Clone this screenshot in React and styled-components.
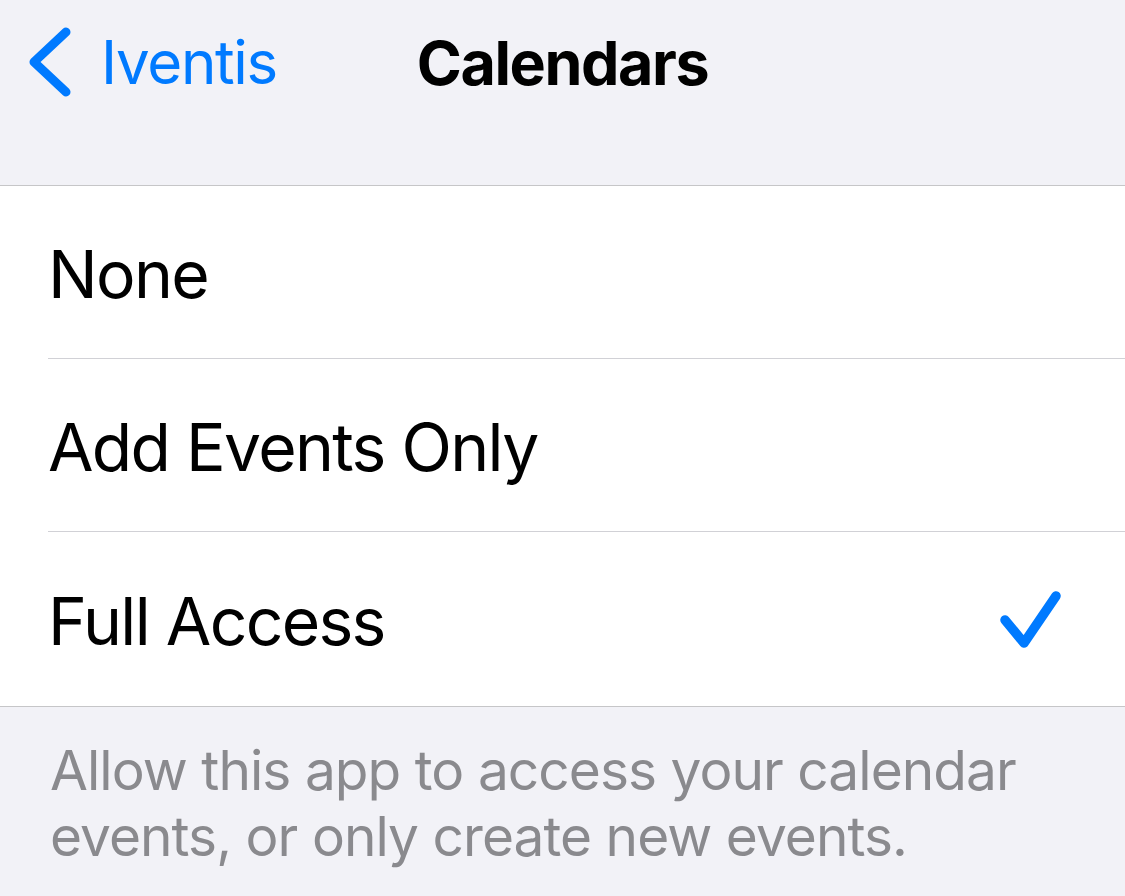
import React, { useState } from 'react';
import styled, { createGlobalStyle } from 'styled-components';

const GlobalStyle = createGlobalStyle`
  html, body {
    margin: 0;
    padding: 0;
    background: #f2f2f7;
  }
  body {
    font-family: Inter, "Noto Sans", sans-serif;
    -webkit-font-smoothing: antialiased;
  }
`;

const Page = styled.div`
  width: 1125px;
  height: 896px;
  background: #f2f2f7;
  overflow: hidden;
`;

const NavBar = styled.header`
  display: grid;
  grid-template-columns: 1fr auto 1fr;
  align-items: start;
  height: 159px;
  padding-top: 26px;
  border-bottom: 1px solid #c6c6c8;
`;

const BackButton = styled.button`
  justify-self: start;
  display: flex;
  align-items: center;
  gap: 27px;
  margin-left: 26px;
  padding: 0;
  border: 0;
  background: none;
  color: #007aff;
  font-family: inherit;
  font-size: 60px;
  letter-spacing: -1.35px;
  cursor: pointer;
`;

const Title = styled.h1`
  margin: 0;
  font-size: 61px;
  font-weight: 700;
  letter-spacing: -1.4px;
  color: #000;
  line-height: 74px;
`;

const List = styled.ul`
  margin: 0;
  padding: 0 0 0 48px;
  list-style: none;
  background: #fff;
  border-bottom: 1px solid #c6c6c8;
`;

const Row = styled.li`
  box-sizing: border-box;
  height: ${({ $last }) => ($last ? '174px' : '173px')};
  display: flex;
  align-items: center;
  justify-content: space-between;
  padding-right: 62px;
  border-bottom: ${({ $last }) => ($last ? 'none' : '1px solid #d1d1d6')};
  cursor: pointer;
`;

const RowLabel = styled.span`
  margin-top: 3px;
  font-size: 66px;
  letter-spacing: -1.7px;
  color: #000;
`;

const CheckMark = styled.svg`
  margin-top: 8px;
`;

const Footer = styled.p`
  margin: 0;
  padding: 30px 48px 0 50px;
  font-size: 55px;
  line-height: 66px;
  letter-spacing: -0.95px;
  color: #8a8a8e;
`;

const Chevron = () => (
  <svg width="48" height="72" viewBox="0 0 48 72" fill="none">
    <path d="M40 6 L8 36 L40 66" stroke="#007aff" strokeWidth="9" strokeLinecap="round" strokeLinejoin="round" />
  </svg>
);

const Check = () => (
  <CheckMark width="66" height="66" viewBox="0 0 66 66" fill="none">
    <path d="M8 30 L27 53 L59 6" stroke="#007aff" strokeWidth="9.5" strokeLinecap="round" strokeLinejoin="round" />
  </CheckMark>
);

const options = ['None', 'Add Events Only', 'Full Access'];

const App = () => {
  const [selected, setSelected] = useState('Full Access');

  return (
    <Page>
      <GlobalStyle />
      <NavBar>
        <BackButton>
          <Chevron />
          Iventis
        </BackButton>
        <Title>Calendars</Title>
        <div />
      </NavBar>
      <List>
        {options.map((option, i) => (
          <Row key={option} $last={i === options.length - 1} onClick={() => setSelected(option)}>
            <RowLabel>{option}</RowLabel>
            {selected === option && <Check />}
          </Row>
        ))}
      </List>
      <Footer>Allow this app to access your calendar events, or only create new events.</Footer>
    </Page>
  );
};

export default App;
